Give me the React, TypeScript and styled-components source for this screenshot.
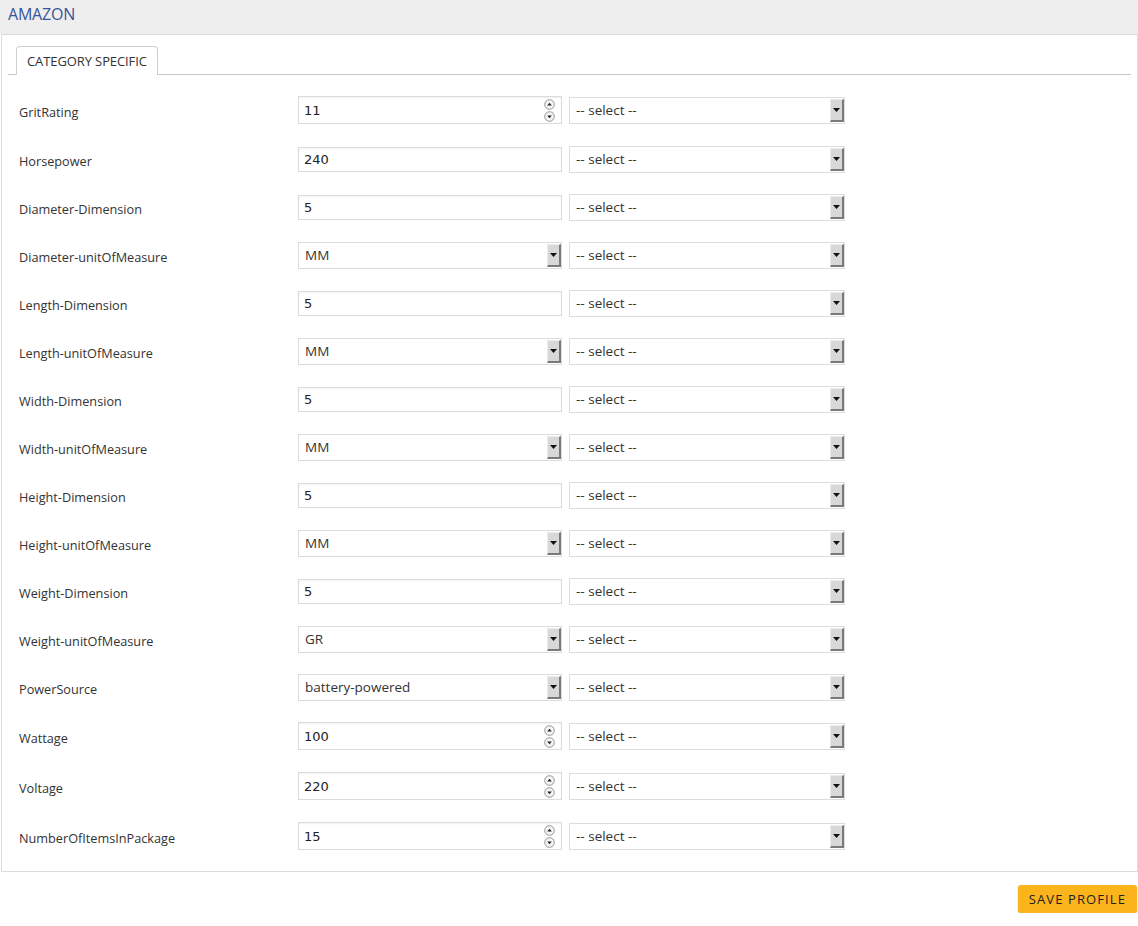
import styled, { createGlobalStyle } from "styled-components"

type Field = {
    label: string
    kind: "text" | "number" | "select"
    value: string
}

const fields: Field[] = [
    { label: "GritRating", kind: "number", value: "11" },
    { label: "Horsepower", kind: "text", value: "240" },
    { label: "Diameter-Dimension", kind: "text", value: "5" },
    { label: "Diameter-unitOfMeasure", kind: "select", value: "MM" },
    { label: "Length-Dimension", kind: "text", value: "5" },
    { label: "Length-unitOfMeasure", kind: "select", value: "MM" },
    { label: "Width-Dimension", kind: "text", value: "5" },
    { label: "Width-unitOfMeasure", kind: "select", value: "MM" },
    { label: "Height-Dimension", kind: "text", value: "5" },
    { label: "Height-unitOfMeasure", kind: "select", value: "MM" },
    { label: "Weight-Dimension", kind: "text", value: "5" },
    { label: "Weight-unitOfMeasure", kind: "select", value: "GR" },
    { label: "PowerSource", kind: "select", value: "battery-powered" },
    { label: "Wattage", kind: "number", value: "100" },
    { label: "Voltage", kind: "number", value: "220" },
    { label: "NumberOfItemsInPackage", kind: "number", value: "15" },
]

const SelectBox: React.FC<{ value: string; width: number }> = ({ value, width }) => {
    return (
        <SelectWrap $width={width}>
            <SelectText>{value}</SelectText>
            <ArrowBtn>
                <svg width="7" height="4" viewBox="0 0 7 4">
                    <path d="M0 0 H7 L3.5 4 Z" fill="#111" />
                </svg>
            </ArrowBtn>
        </SelectWrap>
    )
}

const SpinBtn: React.FC<{ up?: boolean }> = ({ up }) => {
    return (
        <svg width="11" height="11" viewBox="0 0 11 11">
            <circle cx="5.5" cy="5.5" r="4.8" fill="#f4f4f4" stroke="#8a8a8a" strokeWidth="0.9" />
            {up
                ? <path d="M3.2 6.6 H7.8 L5.5 3.8 Z" fill="#222" />
                : <path d="M3.2 4.4 H7.8 L5.5 7.2 Z" fill="#222" />}
        </svg>
    )
}

const App: React.FC = () => {
    return (
        <>
            <GlobalStyle />
            <Header>
                <Title>AMAZON</Title>
            </Header>
            <Panel>
                <TabStrip>
                    <Tab>CATEGORY SPECIFIC</Tab>
                </TabStrip>
                <Rows>
                    {fields.map((f, i) => {
                        return (
                            <Row key={i} $tall={f.kind === "number"}>
                                <Label>{f.label}</Label>
                                {f.kind === "select" ? (
                                    <SelectBox value={f.value} width={264} />
                                ) : (
                                    <InputBox $tall={f.kind === "number"}>
                                        <InputText>{f.value}</InputText>
                                        {f.kind === "number" && (
                                            <Spinner>
                                                <SpinBtn up />
                                                <SpinBtn />
                                            </Spinner>
                                        )}
                                    </InputBox>
                                )}
                                <SelectBox value="-- select --" width={276} />
                            </Row>
                        )
                    })}
                </Rows>
            </Panel>
            <Footer>
                <SaveBtn>SAVE PROFILE</SaveBtn>
            </Footer>
        </>
    )
}

const GlobalStyle = createGlobalStyle`
    body {
        margin: 0;
        background: #fff;
        font-family: "Open Sans", "Noto Sans", sans-serif;
        color: #333;
    }
`

const Header = styled.div`
    height: 34px;
    background: #eeeeee;
    display: flex;
    align-items: center;
    padding-left: 8px;
`

const Title = styled.div`
    font-size: 16px;
    color: #36559a;
    letter-spacing: -0.2px;
    margin-top: -6px;
`

const Panel = styled.div`
    margin-left: 1px;
    width: 1123px;
    border: 1px solid #dcdcdc;
    background: #fff;
    padding: 11px 6px 10px 6px;
`

const TabStrip = styled.div`
    display: flex;
    padding-left: 8px;
    border-bottom: 1px solid #c8c8c8;
`

const Tab = styled.div`
    height: 28px;
    padding: 0 10px;
    display: flex;
    align-items: center;
    border: 1px solid #cfcfcf;
    border-bottom: none;
    border-radius: 4px 4px 0 0;
    font-size: 13px;
    letter-spacing: -0.1px;
    color: #333;
    margin-bottom: -1px;
    background: #fff;
`

const Rows = styled.div`
    padding: 10px 0 0 11px;
    display: flex;
    flex-direction: column;
`

const Row = styled.div<{ $tall: boolean }>`
    display: grid;
    grid-template-columns: 279px 264px 276px;
    align-items: center;
    height: ${p => (p.$tall ? 50 : 48)}px;

    & > *:last-child {
        margin-left: 7px;
    }
`

const Label = styled.div`
    font-size: 12.7px;
    color: #333;
    padding-top: 3px;
`

const InputBox = styled.div<{ $tall: boolean }>`
    box-sizing: border-box;
    height: ${p => (p.$tall ? 28 : 25)}px;
    border: 1px solid #dcdcdc;
    box-shadow: inset 0 1px 2px rgba(0, 0, 0, 0.06);
    display: flex;
    align-items: center;
    padding: 0 6px 0 5px;
    background: #fff;
`

const InputText = styled.div`
    flex: 1;
    font-family: "DejaVu Sans", sans-serif;
    font-size: 13px;
    color: #222;
`

const Spinner = styled.div`
    display: flex;
    flex-direction: column;
    gap: 1px;
    line-height: 0;
`

const SelectWrap = styled.div<{ $width: number }>`
    box-sizing: border-box;
    width: ${p => p.$width}px;
    height: 27px;
    border: 1px solid #dcdcdc;
    display: flex;
    align-items: stretch;
    background: #fff;
    padding: 1px 0 1px 0;
`

const SelectText = styled.div`
    flex: 1;
    display: flex;
    align-items: center;
    padding-left: 6px;
    font-size: 13.5px;
    color: #333;
`

const ArrowBtn = styled.div`
    width: 14px;
    box-sizing: border-box;
    background: #d8d8d8;
    border-top: 1px solid #ececec;
    border-left: 1px solid #ececec;
    border-right: 2px solid #7a7a7a;
    border-bottom: 2px solid #7a7a7a;
    display: flex;
    align-items: center;
    justify-content: center;
`

const Footer = styled.div`
    display: flex;
    justify-content: flex-end;
    padding: 13px 1px 0 0;
`

const SaveBtn = styled.button`
    height: 28px;
    padding: 0 11px;
    border: none;
    border-radius: 3px;
    background: #fbb41c;
    box-shadow: 0 1px 2px rgba(0, 0, 0, 0.2);
    font-family: "Open Sans", sans-serif;
    font-size: 13px;
    letter-spacing: 1.1px;
    color: #222;
`

export default App
